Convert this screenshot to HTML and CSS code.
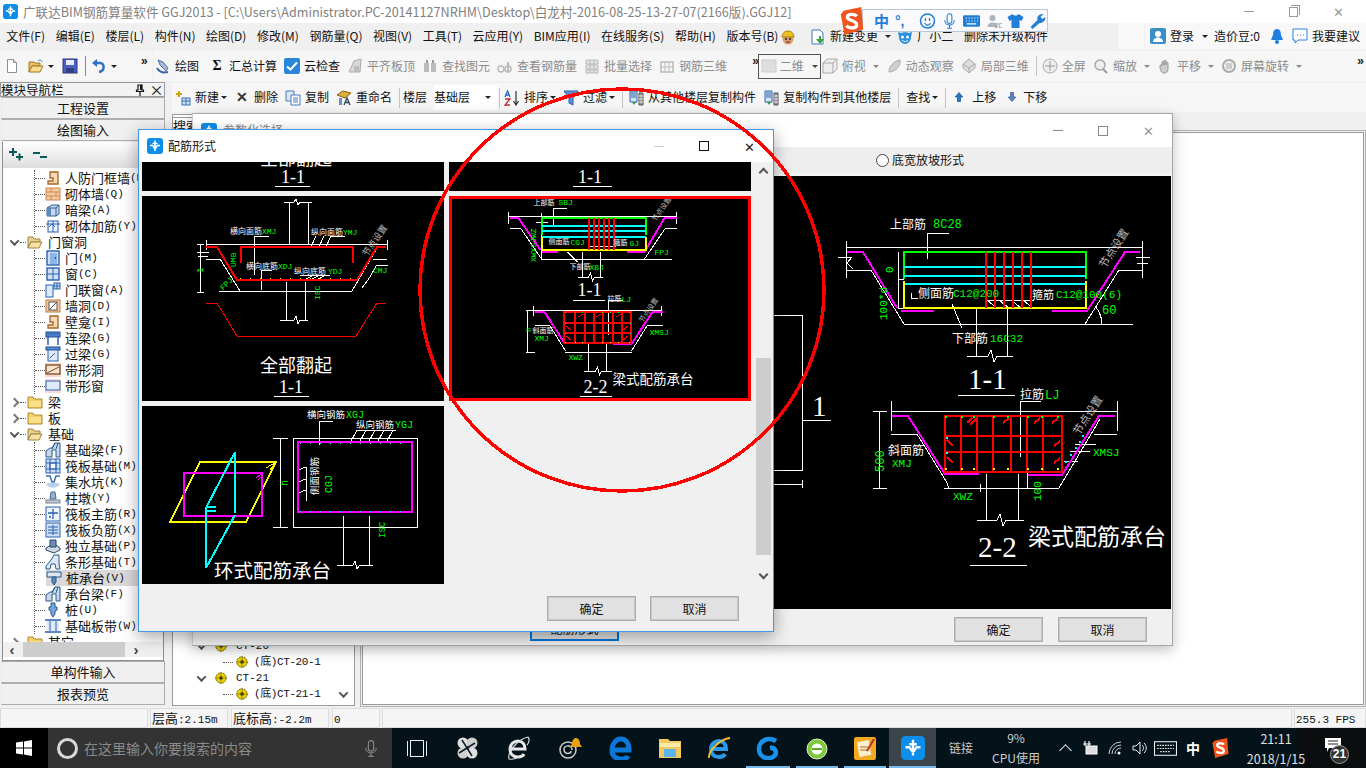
FILE: index.html
```html
<!DOCTYPE html>
<html lang="zh">
<head>
<meta charset="utf-8">
<title>广联达BIM钢筋算量软件</title>
<link rel="stylesheet" href="styles.css">
</head>
<body>
<svg class="defs" aria-hidden="true">
<symbol id="logo" viewBox="0 0 16 16"><rect width="16" height="16" rx="3" fill="#0c8eea"/><path d="M8 2.500V13M3 7.500h2.500c1 0 1 3 2.500 3s1.500-3 2.500-3H13M5.500 5.500h5" fill="none" stroke="#fff" stroke-width="1.600"/></symbol>
<symbol id="t-new" viewBox="0 0 16 16"><path d="M3.500 1.500h6l3 3v10h-9z" fill="#fff" stroke="#8a8f99"/><path d="M9.500 1.500v3h3" fill="#dfe6f2" stroke="#8a8f99"/></symbol>
<symbol id="t-open" viewBox="0 0 16 16"><path d="M1 14V4h5l1 1h5v3H4z" fill="#e8c060" stroke="#a07820"/><path d="M1 14l3-6h11l-3 6z" fill="#f5dc90" stroke="#a07820"/><path d="M10 3c2-2 3-1 4 1" fill="none" stroke="#3a70c0"/></symbol>
<symbol id="t-save" viewBox="0 0 16 16"><rect x="1" y="1" width="14" height="14" fill="#4a5fc0" stroke="#2c3680"/><rect x="4" y="2" width="8" height="5" fill="#e8ecf8"/><rect x="4" y="10" width="8" height="5" fill="#30407c"/></symbol>
<symbol id="t-undo" viewBox="0 0 16 16"><path d="M4 5h5c5 0 5 8-1 9" fill="none" stroke="#2f6fc8" stroke-width="2.500"/><path d="M1 5l5-4v8z" fill="#2f6fc8"/></symbol>
<symbol id="t-draw" viewBox="0 0 16 16"><path d="M3 2l5 2 5 6-2 3-6-6z" fill="#a8b8d8" stroke="#5070a0"/><path d="M2 10c3 5 7 5 11 4" fill="none" stroke="#3a60b0" stroke-width="2"/></symbol>
<symbol id="t-cloud" viewBox="0 0 16 16"><rect width="16" height="16" rx="2" fill="#2a86d8"/><path d="M3 8.500l3.500 3L13 4.500" fill="none" stroke="#fff" stroke-width="2"/></symbol>
<symbol id="t-flat" viewBox="0 0 16 16"><path d="M2 14l5-11 7-2-1 13z" fill="#d8d8d8" stroke="#aaa"/><path d="M7 8h5v6H7z" fill="#bbb"/></symbol>
<symbol id="t-find" viewBox="0 0 16 16"><path d="M2 5h5v9H2zM9 5h5v9H9z" fill="#bbb"/><path d="M4 2h2v3H4zM10 2h2v3h-2z" fill="#999"/></symbol>
<symbol id="t-qty" viewBox="0 0 16 16"><circle cx="4" cy="11" r="3" fill="none" stroke="#bbb" stroke-width="1.500"/><path d="M11 4v10" stroke="#bbb" stroke-width="2"/><circle cx="11" cy="11" r="3" fill="none" stroke="#bbb" stroke-width="1.500"/></symbol>
<symbol id="t-batch" viewBox="0 0 16 16"><path d="M2 2h12v4H2zM2 7h12v4H2zM2 12h12v3H2z" fill="#e2e2e2" stroke="#bbb"/><path d="M6 2v13M10 2v13" stroke="#bbb"/></symbol>
<symbol id="t-3d" viewBox="0 0 16 16"><path d="M2 4h12v10H2z" fill="none" stroke="#bbb" stroke-width="1.500"/><path d="M2 9h12M6 4v10M10 4v10" stroke="#bbb"/></symbol>
<symbol id="t-flat2" viewBox="0 0 16 16"><rect x="1" y="2" width="14" height="12" fill="#dedede" stroke="#ccc"/></symbol>
<symbol id="t-top" viewBox="0 0 16 16"><path d="M1 5l4-4h10v10l-4 4H1z" fill="#eee" stroke="#aaa"/><path d="M1 5h10v10M11 5l4-4" fill="none" stroke="#aaa"/></symbol>
<symbol id="t-orbit" viewBox="0 0 16 16"><path d="M3 14C3 8 8 3 14 2c1 6-4 11-10 12z" fill="#cfcfcf" stroke="#aaa"/></symbol>
<symbol id="t-local" viewBox="0 0 16 16"><path d="M2 6l6-5 6 5v4l-6 5-6-5z" fill="#ddd" stroke="#aaa"/><path d="M2 6l6 4 6-4M8 10v5" fill="none" stroke="#aaa"/></symbol>
<symbol id="t-full" viewBox="0 0 16 16"><circle cx="8" cy="8" r="7" fill="#eee" stroke="#aaa"/><path d="M8 3v10M3 8h10" stroke="#999"/></symbol>
<symbol id="t-zoom" viewBox="0 0 16 16"><circle cx="7" cy="7" r="5" fill="#eee" stroke="#aaa" stroke-width="1.500"/><path d="M10 11l4 4" stroke="#999" stroke-width="2"/></symbol>
<symbol id="t-pan" viewBox="0 0 16 16"><path d="M3 9c0-3 2-3 2-1V4c0-1 2-1 2 0v3-4c0-1 2-1 2 0v4-2c0-1 2-1 2 0v6c0 3-2 4-4 4s-3-1-4-5z" fill="#ccc" stroke="#999"/></symbol>
<symbol id="t-rot" viewBox="0 0 16 16"><circle cx="8" cy="8" r="6" fill="#f0f0f0" stroke="#aaa" stroke-width="2"/><rect x="5" y="5" width="6" height="6" fill="#ccc"/></symbol>
<symbol id="t-add" viewBox="0 0 16 16"><path d="M4 1v6M1 4h6" stroke="#d8a010" stroke-width="2"/><rect x="7" y="8" width="8" height="7" fill="#cfe0f5" stroke="#3a70b0"/><path d="M7 11h8M11 8v7" stroke="#3a70b0"/></symbol>
<symbol id="t-copy" viewBox="0 0 16 16"><path d="M1 1h8v10H1z" fill="#d8e6f6" stroke="#4a78b8"/><path d="M6 5h9v10H6z" fill="#fff" stroke="#4a78b8"/><path d="M8 8h5M8 10h5M8 12h5" stroke="#4a78b8"/></symbol>
<symbol id="t-ren" viewBox="0 0 16 16"><path d="M1 5l6-4 8 2-6 5z" fill="#d8b040" stroke="#906010"/><path d="M3 8h3v7H3z" fill="#6a90c0"/><path d="M8 15l3-7 3 7M9.500 12.500h3" fill="none" stroke="#345" stroke-width="1.300"/></symbol>
<symbol id="t-sort" viewBox="0 0 16 16"><path d="M1 7l2.500-6L6 7M2 5h3" fill="none" stroke="#2a66b8" stroke-width="1.300"/><path d="M1 9h5L1 15h5" fill="none" stroke="#b03030" stroke-width="1.300"/><path d="M12 1v13M9.500 11l2.500 4 2.500-4" fill="none" stroke="#333" stroke-width="1.200"/></symbol>
<symbol id="t-filter" viewBox="0 0 16 16"><path d="M1 1h14L10 8v7l-4-2V8z" fill="#5a90d8" stroke="#2c60a8"/></symbol>
<symbol id="t-cp1" viewBox="0 0 16 16"><path d="M2 1h7v11H2z" fill="#d8e6f6" stroke="#2a60a8"/><path d="M3 3h5M3 5h5M3 7h5" stroke="#2a60a8"/><path d="M4 12l2 3 2-3z" fill="#2aa040"/><path d="M11 3h4v12h-4z" fill="#999" stroke="#555"/><path d="M11 6h4M11 9h4M11 12h4" stroke="#eee"/></symbol>
<symbol id="t-up" viewBox="0 0 16 16"><path d="M8 2l5 6h-3v6H6V8H3z" fill="#2a78c8" stroke="#1a5090"/></symbol>
<symbol id="t-down" viewBox="0 0 16 16"><path d="M6 2h4v6h3l-5 6-5-6h3z" fill="#5a84c8" stroke="#3a5a98"/></symbol>
<symbol id="m-hat" viewBox="0 0 16 16"><circle cx="8" cy="10" r="5.500" fill="#d8a070"/><path d="M2 8c0-8 12-8 12 0z" fill="#f0c020" stroke="#a08010"/><circle cx="6" cy="10" r="1" fill="#222"/><circle cx="10" cy="10" r="1" fill="#222"/><path d="M6 13h4" stroke="#622"/></symbol>
<symbol id="m-doc" viewBox="0 0 16 16"><path d="M2 1h8l3 3v11H2z" fill="#fff" stroke="#3a78c0"/><path d="M7 9h3V6h2v3h3l-4 5z" fill="#3aa040" transform="translate(-1 1)"/></symbol>
<symbol id="m-bot" viewBox="0 0 16 16"><path d="M1 3l3 1c2-1 6-1 8 0l3-1-1 5c0 4-3 7-6 7s-6-3-6-7z" fill="#2a90e0"/><circle cx="5.500" cy="8" r="1.500" fill="#fff"/><circle cx="10.500" cy="8" r="1.500" fill="#fff"/><path d="M5 11c2 2 4 2 6 0" fill="none" stroke="#fff"/></symbol>
<symbol id="m-user" viewBox="0 0 16 16"><rect width="16" height="16" rx="2" fill="#3a8ec8"/><circle cx="8" cy="6" r="3" fill="#fff"/><path d="M3 14c0-6 10-6 10 0z" fill="#fff"/></symbol>
<symbol id="m-bell" viewBox="0 0 16 16"><path d="M8 1c3 0 4 3 4 6l2 5H2l2-5c0-3 1-6 4-6z" fill="#1f7ee0"/><circle cx="8" cy="14" r="2" fill="#1f7ee0"/></symbol>
<symbol id="m-msg" viewBox="0 0 16 16"><path d="M1 1h14v11H6l-3 3v-3H1z" fill="#fff" stroke="#2a80e0"/><path d="M5 7h1M8 7h1M11 7h1" stroke="#2a80e0"/></symbol>
<symbol id="m-pin" viewBox="0 0 10 12"><path d="M3 1h4v5h1.500v1.500h-7V6H3zM5 7.500V12" fill="none" stroke="#111" stroke-width="1.200"/><path d="M5 1h2v5H5z" fill="#111"/></symbol>
<symbol id="n-plus" viewBox="0 0 16 16"><path d="M1 5h8M5 1v8M8 10h7M11.500 6.500v7" stroke="#0a5a5a" stroke-width="2"/></symbol>
<symbol id="n-minus" viewBox="0 0 16 16"><path d="M1 6h7M8 10h7" stroke="#0a5a5a" stroke-width="2"/></symbol>
<symbol id="f-closed" viewBox="0 0 16 16"><path d="M1 14V3h5l1 2h8v9z" fill="#f3d26a" stroke="#b08a2a"/><path d="M2 7h12v6H2z" fill="#f8e08a"/></symbol>
<symbol id="f-open" viewBox="0 0 16 16"><path d="M1 14V3h5l1 2h6v3H4z" fill="#e8d090" stroke="#a08440"/><path d="M1 14l3-6h11l-3 6z" fill="#f6e2a8" stroke="#a08440"/></symbol>
<symbol id="a-frame" viewBox="0 0 16 16"><path d="M5 2h8v12H3v-3h5V8H5z" fill="#f7d8b8" stroke="#a86420" stroke-width="1.300"/></symbol>
<symbol id="a-brick" viewBox="0 0 16 16"><rect x="1" y="2" width="14" height="12" fill="#f4c8a0" stroke="#d08a50"/><path d="M1 6h14M1 10h14M6 2v4M11 6v4M6 10v4" stroke="#d08a50"/></symbol>
<symbol id="a-hid" viewBox="0 0 16 16"><path d="M2 6l5-3h7v9l-3 2H2z" fill="#c8d8ec" stroke="#2a5a90"/><path d="M2 6h9v8M11 6l3-3" fill="none" stroke="#2a5a90"/><rect x="2" y="6" width="4" height="8" fill="#5a88b8"/></symbol>
<symbol id="a-add" viewBox="0 0 16 16"><rect x="3" y="3" width="10" height="11" fill="#eef3fa" stroke="#2a60b0"/><path d="M1 6h14M8 3v11M4 9l3-3 3 3" fill="none" stroke="#2a60b0"/></symbol>
<symbol id="a-door" viewBox="0 0 16 16"><rect x="2" y="1" width="12" height="14" fill="#cfe0f5" stroke="#2a60b0" stroke-width="1.400"/><rect x="5" y="3" width="7" height="11" fill="#8fb4e8"/><circle cx="10.500" cy="8" r=".8" fill="#123"/></symbol>
<symbol id="a-win" viewBox="0 0 16 16"><rect x="2" y="2" width="12" height="12" fill="#cfe0f5" stroke="#2a60b0" stroke-width="1.400"/><path d="M8 2v12M2 8h12" stroke="#2a60b0"/></symbol>
<symbol id="a-dw" viewBox="0 0 16 16"><rect x="1" y="3" width="7" height="12" fill="#dfeaf8" stroke="#2a60b0"/><rect x="9" y="1" width="6" height="6" fill="#cfe0f5" stroke="#2a60b0"/><path d="M12 1v6M9 4h6" stroke="#2a60b0"/></symbol>
<symbol id="a-hole" viewBox="0 0 16 16"><rect x="1" y="2" width="14" height="12" fill="#f4c8a0" stroke="#c07a40"/><rect x="4" y="4" width="8" height="8" fill="#fff" stroke="#555"/><path d="M4 12l8-8" stroke="#555"/></symbol>
<symbol id="a-link" viewBox="0 0 16 16"><rect x="1" y="2" width="14" height="5" fill="#4a80c8" stroke="#1f4f90"/><path d="M3 7v8M13 7v8M3 4h1M6 4h1M9 4h1M12 4h1" stroke="#2a60b0" stroke-width="1.500"/></symbol>
<symbol id="a-lint" viewBox="0 0 16 16"><rect x="1" y="1" width="14" height="3" fill="#5a90d0" stroke="#1f4f90"/><rect x="3" y="4" width="10" height="11" fill="#dfeaf8" stroke="#2a60b0"/><path d="M5 12l5-5" stroke="#2a60b0"/></symbol>
<symbol id="a-bhole" viewBox="0 0 16 16"><path d="M0 1h16v14H0z" fill="#f6d8c8"/><rect x="1" y="3" width="14" height="9" fill="#f2e6d0" stroke="#804820" stroke-width="1.300"/><path d="M2 11l12-6" stroke="#804820"/></symbol>
<symbol id="a-bwin" viewBox="0 0 16 16"><path d="M0 1h16v14H0z" fill="#f8d8d8"/><rect x="1" y="3" width="14" height="9" fill="#dfeaf8" stroke="#2a60b0"/></symbol>
<symbol id="b-beam" viewBox="0 0 16 16"><path d="M1 15V9l4-3h2l3-5h5v14h-4V8H7v7z" fill="#c6d8ee" stroke="#28588c"/><path d="M10 1l-3 6M13 1l-2 6" stroke="#28588c"/></symbol>
<symbol id="b-raft" viewBox="0 0 16 16"><rect x="1" y="1" width="14" height="14" fill="#cfe0f5" stroke="#2a60b0"/><rect x="5" y="5" width="6" height="6" fill="#fff" stroke="#2a60b0"/><path d="M1 5h14M1 11h14M5 1v14M11 1v14" stroke="#2a60b0"/></symbol>
<symbol id="b-sump" viewBox="0 0 16 16"><path d="M1 2h4l2 6h2l2-6h4" fill="none" stroke="#3a70b0" stroke-width="1.500"/><path d="M1 10c3 5 11 5 14 0l-3-1H4z" fill="#b8d0ea"/></symbol>
<symbol id="b-pier" viewBox="0 0 16 16"><path d="M6 2h4l1 7H5z" fill="#9ab0cc" stroke="#4a6a90"/><rect x="1" y="10" width="14" height="3" fill="#c0c8d4" stroke="#7a8494"/></symbol>
<symbol id="b-rm" viewBox="0 0 16 16"><rect x="1" y="1" width="14" height="14" fill="#eef4fb" stroke="#2a60b0"/><path d="M8 3v10M3 7h10M4 11h2" stroke="#2a60b0" stroke-width="1.300"/></symbol>
<symbol id="b-rn" viewBox="0 0 16 16"><rect x="1" y="1" width="14" height="14" fill="#cfe0f5" stroke="#2a60b0"/><path d="M8 3v10M3 8h10M3 5h10M3 11h10" stroke="#2a60b0"/></symbol>
<symbol id="b-iso" viewBox="0 0 16 16"><path d="M1 10l5-3h5l4 3v2l-6 3-8-3z" fill="#cfd8e4" stroke="#28486c"/><path d="M5 2h6v7H5z" fill="#6a8eb8" stroke="#28486c"/></symbol>
<symbol id="b-strip" viewBox="0 0 16 16"><path d="M1 15v-3l5-6 3-5h5v9l1 5h-4l-1-5H6l-1 5z" fill="#dde8f4" stroke="#28588c"/></symbol>
<symbol id="b-cap" viewBox="0 0 16 16"><path d="M1 2h14v5H1z" fill="#dfe6ee" stroke="#28588c"/><path d="M6 7h4v5l-2 3-2-3z" fill="#5a88c0" stroke="#28588c"/></symbol>
<symbol id="b-pile" viewBox="0 0 16 16"><path d="M6 1h4v4h2v3l-2 1v3l-2 3-2-3V9L4 8V5h2z" fill="#7aa4d8" stroke="#28588c"/></symbol>
<symbol id="b-band" viewBox="0 0 16 16"><path d="M0 2h16M0 14h16" stroke="#2a60b0" stroke-width="1.500"/><rect x="2" y="3" width="12" height="10" fill="#dfeaf8"/><path d="M5 3v10M11 3v10" stroke="#2a60b0"/></symbol>
<symbol id="gear" viewBox="0 0 16 16"><circle cx="8" cy="8" r="6" fill="#e8d000" stroke="#5a5000" stroke-dasharray="2 1"/><circle cx="8" cy="8" r="2" fill="#222"/><path d="M8 1v14M1 8h14" stroke="#6a5a00" stroke-width=".6"/></symbol>
<symbol id="s-pin" viewBox="0 0 24 24"><circle cx="8" cy="7" r="5.500" fill="#e0e0e0"/><circle cx="17" cy="7" r="5.500" fill="#d0d0d0"/><circle cx="8" cy="17" r="5.500" fill="#d0d0d0"/><circle cx="17" cy="17" r="5.500" fill="#e0e0e0"/><path d="M12 12L7 4M12 12l8-5M12 12l5 8M12 12l-8 5" stroke="#10202a" stroke-width="1.500"/></symbol>
<symbol id="s-ie" viewBox="0 0 24 24"><path d="M5 13h14c0-5-3-8-7-8s-8 3-8 8 3 8 8 8c3 0 5-1 6-3" fill="none" stroke="#e8e8e8" stroke-width="3"/><path d="M3 23C1 15 13 3 22 1M22 1c2 2 1 6-1 8M3 23c4 1 8-1 10-2" fill="none" stroke="#e0e0e0" stroke-width="1.200"/></symbol>
<symbol id="s-swirl" viewBox="0 0 24 24"><circle cx="10" cy="14" r="8" fill="none" stroke="#ccc" stroke-width="1.500"/><path d="M14 14c0-6-9-5-8 0s7 4 7 1" fill="none" stroke="#ccc" stroke-width="1.500"/><path d="M14 8c0-8 8-8 8 0l2 3H12z" fill="#e8a010"/></symbol>
<symbol id="s-edge" viewBox="0 0 24 24"><path d="M3 14h17c0-7-3-11-8-11S3 8 3 14s4 9 9 9c3 0 6-1 7-3" fill="none" stroke="#0a78d8" stroke-width="5"/></symbol>
<symbol id="s-folder" viewBox="0 0 24 24"><path d="M1 3h9l2 2h11v17H1z" fill="#f2ca60"/><rect x="2" y="7" width="20" height="4" fill="#fbe9a8"/><rect x="6" y="13" width="12" height="8" fill="#5ab4ee"/></symbol>
<symbol id="s-ie2" viewBox="0 0 24 24"><path d="M5 13h14c0-5-3-8-7-8s-8 3-8 8 3 8 8 8c3 0 5-1 6-3" fill="none" stroke="#2a9ae8" stroke-width="4"/><path d="M2 22C1 15 13 3 23 2" fill="none" stroke="#f0c030" stroke-width="1.800"/></symbol>
<symbol id="s-g" viewBox="0 0 24 24"><path d="M20 5C12 0 3 5 3 13s8 11 14 8c5-3 3-10-3-9" fill="none" stroke="#1a90e8" stroke-width="4.500"/></symbol>
<symbol id="s-green" viewBox="0 0 24 24"><circle cx="12" cy="13" r="10" fill="#7ec83c" stroke="#dff0c0"/><circle cx="12" cy="13" r="5.500" fill="#fff"/><path d="M7 13h10" stroke="#60a828" stroke-width="2"/></symbol>
<symbol id="s-note" viewBox="0 0 24 24"><rect x="1" y="1" width="22" height="23" rx="2" fill="#f2a820"/><rect x="5" y="5" width="12" height="15" fill="#faf0d0" transform="rotate(-10 11 12)"/><path d="M7 11h8M7 14h8" stroke="#a87010"/><path d="M21 3l-7 12" stroke="#c03020" stroke-width="2"/></symbol>
<symbol id="i-mic" viewBox="0 0 16 20"><rect x="5" y="1" width="6" height="12" rx="3" fill="none" stroke="currentColor" stroke-width="1.300"/><path d="M2 9c0 8 12 8 12 0M8 15v4M5 19h6" fill="none" stroke="currentColor" stroke-width="1.300"/></symbol>
<symbol id="i-shirt" viewBox="0 0 16 16"><path d="M5 1L0 4l2 4 2-1v8h8V7l2 1 2-4-5-3c-1 2-5 2-6 0z" fill="#1f7ed8"/></symbol>
<symbol id="i-wrench" viewBox="0 0 16 16"><path d="M1 14l7-7c-1-4 2-6 6-6l-3 3 2 2 3-2c0 4-3 6-6 6l-7 6z" fill="#1f7ed8"/></symbol>
<symbol id="i-kb" viewBox="0 0 18 14"><rect x="0" y="1" width="18" height="12" rx="1.500" fill="#1f7ed8"/><path d="M3 4h1M6 4h1M9 4h1M12 4h1M15 4h1M3 7h1M6 7h1M9 7h1M12 7h1M15 7h1M4 10h10" stroke="#fff" stroke-width="1.300"/></symbol>
<symbol id="i-sg" viewBox="0 0 24 30"><path d="M3 4L22 0l2 24L4 30 0 8z" fill="#f0541e"/><path d="M17 10c-2-3-10-3-10 1s10 3 10 8-9 4-11 1" fill="none" stroke="#fff" stroke-width="3.500"/></symbol>
</svg>

<div class="app">
  <header class="titlebar">
    <svg class="app-ic"><use href="#logo"/></svg>
    <span class="title-text">广联达BIM钢筋算量软件 GGJ2013 - [C:\Users\Administrator.PC-20141127NRHM\Desktop\白龙村-2016-08-25-13-27-07(2166版).GGJ12]</span>
    <div class="win-ctl">
      <span class="wc-min"></span><span class="wc-restore"></span><span class="wc-close">✕</span>
    </div>
  </header>

  <nav class="menubar">
    <span>文件(F)</span><span>编辑(E)</span><span>楼层(L)</span><span>构件(N)</span><span>绘图(D)</span><span>修改(M)</span><span>钢筋量(Q)</span><span>视图(V)</span><span>工具(T)</span><span>云应用(Y)</span><span>BIM应用(I)</span><span>在线服务(S)</span><span>帮助(H)</span><span>版本号(B)</span>
    <svg class="ic hat"><use href="#m-hat"/></svg>
    <span class="mi first"><svg class="ic"><use href="#m-doc"/></svg>新建变更<i class="dd"></i></span>
    <span class="mi"><svg class="ic"><use href="#m-bot"/></svg>厂小二</span>
    <span>删除未升级构件</span>
    <div class="account">
      <span class="blank"></span>
      <div class="acc-row">
        <svg class="ic"><use href="#m-user"/></svg><span>登录</span><i class="dd"></i>
        <span class="bean">造价豆:0</span>
        <svg class="ic bell"><use href="#m-bell"/></svg>
        <svg class="ic"><use href="#m-msg"/></svg><span>我要建议</span>
      </div>
    </div>
  </nav>

  <div class="tb1">
    <div class="tb1-left">
      <svg class="ic"><use href="#t-new"/></svg>
      <svg class="ic gapm"><use href="#t-open"/></svg><i class="dd"></i>
      <svg class="ic gapm"><use href="#t-save"/></svg>
      <span class="vsep"></span>
      <svg class="ic"><use href="#t-undo"/></svg><i class="dd"></i>
      <b class="more">»</b>
    </div>
    <div class="tb1-right">
      <span class="tool"><svg class="ic"><use href="#t-draw"/></svg>绘图</span>
      <span class="tool w"><b class="sigma">Σ</b>汇总计算</span>
      <span class="tool"><svg class="ic"><use href="#t-cloud"/></svg>云检查</span>
      <span class="tool off"><svg class="ic"><use href="#t-flat"/></svg>平齐板顶</span>
      <span class="tool off"><svg class="ic"><use href="#t-find"/></svg>查找图元</span>
      <span class="tool off"><svg class="ic"><use href="#t-qty"/></svg>查看钢筋量</span>
      <span class="tool off"><svg class="ic"><use href="#t-batch"/></svg>批量选择</span>
      <span class="tool off"><svg class="ic"><use href="#t-3d"/></svg>钢筋三维</span>
      <b class="more m2">»</b>
      <span class="combo2"><svg class="ic"><use href="#t-flat2"/></svg>二维<i class="dd"></i></span>
      <span class="tool off n"><svg class="ic"><use href="#t-top"/></svg>俯视<i class="dd g"></i></span>
      <span class="tool off"><svg class="ic"><use href="#t-orbit"/></svg>动态观察</span>
      <span class="tool off"><svg class="ic"><use href="#t-local"/></svg>局部三维</span>
      <span class="vsep lt tight"></span>
      <span class="tool off"><svg class="ic"><use href="#t-full"/></svg>全屏</span>
      <span class="tool off"><svg class="ic"><use href="#t-zoom"/></svg>缩放<i class="dd g"></i></span>
      <span class="tool off"><svg class="ic"><use href="#t-pan"/></svg>平移<i class="dd g"></i></span>
      <span class="tool off"><svg class="ic"><use href="#t-rot"/></svg>屏幕旋转<i class="dd g"></i></span>
      <b class="more end">»</b>
    </div>
  </div>

  <div class="workspace">
    <aside class="sidebar">
      <div class="nav-head"><span>模块导航栏</span><svg class="pin"><use href="#m-pin"/></svg><span class="x">×</span></div>
      <button class="navbtn" type="button">工程设置</button>
      <button class="navbtn" type="button">绘图输入</button>
      <div class="treepane">
        <div class="tree-tools"><svg class="ic"><use href="#n-plus"/></svg><svg class="ic"><use href="#n-minus"/></svg></div>
        <div class="tree">
          <div class="lev2">
            <div class="row"><i class="dash"></i><svg class="ic"><use href="#a-frame"/></svg>人防门框墙<em>(R)</em></div>
            <div class="row"><i class="dash"></i><svg class="ic"><use href="#a-brick"/></svg>砌体墙<em>(Q)</em></div>
            <div class="row"><i class="dash"></i><svg class="ic"><use href="#a-hid"/></svg>暗梁<em>(A)</em></div>
            <div class="row"><i class="dash"></i><svg class="ic"><use href="#a-add"/></svg>砌体加筋<em>(Y)</em></div>
          </div>
          <div class="row l1"><i class="chev open"></i><i class="dash s"></i><svg class="ic"><use href="#f-open"/></svg>门窗洞</div>
          <div class="lev2">
            <div class="row"><i class="dash"></i><svg class="ic"><use href="#a-door"/></svg>门<em>(M)</em></div>
            <div class="row"><i class="dash"></i><svg class="ic"><use href="#a-win"/></svg>窗<em>(C)</em></div>
            <div class="row"><i class="dash"></i><svg class="ic"><use href="#a-dw"/></svg>门联窗<em>(A)</em></div>
            <div class="row"><i class="dash"></i><svg class="ic"><use href="#a-hole"/></svg>墙洞<em>(D)</em></div>
            <div class="row"><i class="dash"></i><svg class="ic"><use href="#a-frame"/></svg>壁龛<em>(I)</em></div>
            <div class="row"><i class="dash"></i><svg class="ic"><use href="#a-link"/></svg>连梁<em>(G)</em></div>
            <div class="row"><i class="dash"></i><svg class="ic"><use href="#a-lint"/></svg>过梁<em>(G)</em></div>
            <div class="row"><i class="dash"></i><svg class="ic"><use href="#a-bhole"/></svg>带形洞</div>
            <div class="row"><i class="dash"></i><svg class="ic"><use href="#a-bwin"/></svg>带形窗</div>
          </div>
          <div class="row l1"><i class="chev"></i><i class="dash s"></i><svg class="ic"><use href="#f-closed"/></svg>梁</div>
          <div class="row l1"><i class="chev"></i><i class="dash s"></i><svg class="ic"><use href="#f-closed"/></svg>板</div>
          <div class="row l1"><i class="chev open"></i><i class="dash s"></i><svg class="ic"><use href="#f-open"/></svg>基础</div>
          <div class="lev2">
            <div class="row"><i class="dash"></i><svg class="ic"><use href="#b-beam"/></svg>基础梁<em>(F)</em></div>
            <div class="row"><i class="dash"></i><svg class="ic"><use href="#b-raft"/></svg>筏板基础<em>(M)</em></div>
            <div class="row"><i class="dash"></i><svg class="ic"><use href="#b-sump"/></svg>集水坑<em>(K)</em></div>
            <div class="row"><i class="dash"></i><svg class="ic"><use href="#b-pier"/></svg>柱墩<em>(Y)</em></div>
            <div class="row"><i class="dash"></i><svg class="ic"><use href="#b-rm"/></svg>筏板主筋<em>(R)</em></div>
            <div class="row"><i class="dash"></i><svg class="ic"><use href="#b-rn"/></svg>筏板负筋<em>(X)</em></div>
            <div class="row"><i class="dash"></i><svg class="ic"><use href="#b-iso"/></svg>独立基础<em>(P)</em></div>
            <div class="row"><i class="dash"></i><svg class="ic"><use href="#b-strip"/></svg>条形基础<em>(T)</em></div>
            <div class="row sel"><i class="dash"></i><svg class="ic"><use href="#b-cap"/></svg>桩承台<em>(V)</em></div>
            <div class="row"><i class="dash"></i><svg class="ic"><use href="#b-beam"/></svg>承台梁<em>(F)</em></div>
            <div class="row"><i class="dash"></i><svg class="ic"><use href="#b-pile"/></svg>桩<em>(U)</em></div>
            <div class="row"><i class="dash"></i><svg class="ic"><use href="#b-band"/></svg>基础板带<em>(W)</em></div>
          </div>
          <div class="row l1"><i class="chev"></i><i class="dash s"></i><svg class="ic"><use href="#f-closed"/></svg>其它</div>
        </div>
        <div class="hscroll"><span class="ha">‹</span><span class="hthumb"></span><span class="ha">›</span></div>
      </div>
      <button class="navbtn" type="button">单构件输入</button>
      <button class="navbtn" type="button">报表预览</button>
    </aside>

    <main class="mainarea">
      <div class="tb2">
        <span class="tool"><svg class="ic"><use href="#t-add"/></svg>新建<i class="dd"></i></span>
        <span class="tool"><b class="xmark">✕</b>删除</span>
        <span class="tool"><svg class="ic"><use href="#t-copy"/></svg>复制</span>
        <span class="tool"><svg class="ic"><use href="#t-ren"/></svg>重命名</span>
        <span class="vsep lt"></span>
        <span class="floor-lbl">楼层</span>
        <span class="floor-box">基础层<i class="dd"></i></span>
        <span class="vsep lt after-box"></span>
        <span class="tool"><svg class="ic"><use href="#t-sort"/></svg>排序<i class="dd"></i></span>
        <span class="tool"><svg class="ic"><use href="#t-filter"/></svg>过滤<i class="dd"></i></span>
        <span class="vsep lt tight"></span>
        <span class="tool"><svg class="ic"><use href="#t-cp1"/></svg>从其他楼层复制构件</span>
        <span class="tool"><svg class="ic"><use href="#t-cp1"/></svg>复制构件到其他楼层</span>
        <span class="vsep lt"></span>
        <span class="tool">查找<i class="dd"></i></span>
        <span class="vsep lt"></span>
        <span class="tool mv"><svg class="ic sm"><use href="#t-up"/></svg>上移</span>
        <span class="tool mv dn"><svg class="ic sm"><use href="#t-down"/></svg>下移</span>
      </div>
      <div class="panes">
        <div class="comp-tree">
          <div class="search-row"><span class="search">搜索</span></div>
          <div class="ct-rows">
            <div class="ct"><i class="chev open"></i><svg class="ic g14"><use href="#gear"/></svg><span class="mono">CT-20</span></div>
            <div class="ct sub"><i class="dash"></i><svg class="ic g14"><use href="#gear"/></svg><span class="mono wide">(底)CT-20-1</span></div>
            <div class="ct"><i class="chev open"></i><svg class="ic g14"><use href="#gear"/></svg><span class="mono">CT-21</span></div>
            <div class="ct sub"><i class="dash"></i><svg class="ic g14"><use href="#gear"/></svg><span class="mono wide">(底)CT-21-1</span></div>
          </div>
          <i class="chev open tail"></i>
        </div>
        <div class="canvas"></div>
      </div>
    </main>
  </div>

  <footer class="status">
    <span class="st s0"></span>
    <span class="st s1">层高<em>:2.15m</em></span>
    <span class="st s2">底标高<em>:-2.2m</em></span>
    <span class="st s3"><em>0</em></span>
    <span class="st s4"></span>
    <span class="st s5"><em>255.3 FPS</em></span>
  </footer>
</div>

<section class="win back-win">
  <div class="win-title">
    <svg class="app-ic"><use href="#logo"/></svg><span class="grey">参数化选择</span>
    <div class="dlg-ctl"><span class="wc-min"></span><span class="wc-max"></span><span class="wc-close">✕</span></div>
  </div>
  <div class="radio-row"><span class="radio"></span>底宽放坡形式</div>
  <svg class="cad big" viewBox="193 175 978 433">
    <rect x="193" y="175" width="978" height="433" fill="#000"/>
    <g class="w">
      <path d="M773 314H802V469H773M802 419H831M773 483H802M802 479V487"/>
      <path d="M846 246H1142M846 240V277M846 269H871L904 323H1133M1142 240V277M1142 269H1119L1085 323"/>
      <path d="M838 256H852L847 262L853 268M1136 256H1150M1137 262H1148"/>
      <path d="M898 251V307H904M898 278H904M976 308V355M1007 308V355M967 355H988L991 349L994 361L997 355H1013"/>
      <path d="M927 258V232H949M911 292V297H918M952 303L962 327M1102 323C1102 316 1099 310 1095 305"/>
      <path d="M988 300L996 306M1000 300L1008 306M1012 300L1020 306M1024 300L1032 306M985 299H1034"/>
      <path d="M958 394H1015M970 564H1027"/>
      <path d="M891 410H1117M891 400V430M1117 400V430M891 433H917L946 480L949 487H1059L1100 418M1117 433H1094M879 410V487M873 410H887M873 487H887"/>
      <path d="M986 473V519M1018 473V519M977 519H997L1000 513L1003 525L1006 519H1024M1020 400V456M1020 400H1041"/>
      <path d="M944 487H980M980 483V491M1027 487V470M1096 443H1075M1090 450H1070M1078 460H1064"/>
    </g>
    <g class="m t2"><path d="M847 251H863L897 307"/><path d="M901 310H934M1052 310H1087L1125 251H1140"/></g>
    <path class="gr t2" d="M904 278V251H1086V278"/>
    <path class="cy t2" d="M904 266H1086M904 275H1086M904 283H1086"/>
    <path class="ye t2" d="M904 280V307H1086V280"/>
    <path class="re t2" d="M986 251V307M995 251V307M1004 251V307M1013 251V307M1022 251V307M1031 251V307"/>
    <text class="tw" x="890" y="228" font-size="12">上部筋</text><text class="tg" x="933" y="227" font-size="12">8C28</text>
    <text class="tw" x="918" y="297" font-size="12">侧面筋</text><text class="tg" x="953" y="296" font-size="11">C12@200</text>
    <text class="tw" x="1032" y="298" font-size="11">箍筋</text><text class="tg" x="1056" y="297" font-size="11">C12@100(6)</text>
    <text class="tw" x="952" y="342" font-size="12">下部筋</text><text class="tg" x="990" y="341" font-size="11">16C32</text>
    <text class="tg" x="1102" y="313" font-size="12">60</text>
    <text class="tg" transform="rotate(-90 893 272)" x="893" y="272" font-size="11">0</text>
    <text class="tg" transform="rotate(-90 893 304)" x="878" y="298" font-size="11">100*d</text>
    <text class="tw dim" transform="rotate(-57 1105 268)" x="1105" y="268" font-size="11">节点设置</text>
    <text class="ser" x="968" y="388" font-size="29">1-1</text>
    <text class="ser" x="812" y="415" font-size="29">1</text>
    <g class="m t2"><path d="M892 415H908L945 473H979M1028 474H1062L1099 415H1115"/></g>
    <path class="re t2" d="M945 415H1062V471H945ZM961 415V471M977 415V471M993 415V471M1011 415V471M1027 415V471M1043 415V471M945 435H1062M945 451H1062"/>
    <path class="re t2" d="M967 422L972 417M970 424L976 418M1003 422L1009 417M1034 422L1040 417M1052 422L1058 417M947 439L953 445M947 456L953 462M1060 440L1054 445M1060 457L1054 462"/>
    <path class="gr t2" d="M945 416h2M961 416h2M973 416h2M993 416h2M1007 416h2M1027 416h2M1041 416h2M1057 416h2"/>
    <path class="ye t2" d="M945 468h2M961 468h2M973 468h2M993 468h2M1007 468h2M1027 468h2M1041 468h2M1057 468h2"/>
    <path class="cy t2" d="M946 437h2M946 452h2M1065 461h2M1070 454h2M1075 447h2M1079 441h2M1082 435h2"/>
    <text class="tw" x="888" y="454" font-size="12">斜面筋</text><text class="tg" x="892" y="466" font-size="11">XMJ</text>
    <text class="tg" x="1093" y="455" font-size="11">XMSJ</text><text class="tg" x="953" y="499" font-size="11">XWZ</text>
    <text class="tg" transform="rotate(-90 1041 487)" x="1028" y="487" font-size="11">100</text>
    <text class="tg" transform="rotate(-90 884 459)" x="872" y="459" font-size="12">500</text>
    <text class="tw" x="1020" y="398" font-size="12">拉筋</text><text class="tg" x="1045" y="398" font-size="12">LJ</text>
    <text class="tw dim" transform="rotate(-57 1079 435)" x="1079" y="435" font-size="11">节点设置</text>
    <text class="ser" x="978" y="556" font-size="29">2-2</text>
    <text class="tw" x="1028" y="544" font-size="23">梁式配筋承台</text>
  </svg>
  <div class="win-foot back-foot">
    <button class="dlgbtn under" type="button">配筋形式</button>
    <button class="dlgbtn" type="button">确定</button>
    <button class="dlgbtn" type="button">取消</button>
  </div>
</section>

<section class="win front-win">
  <div class="win-title">
    <svg class="app-ic"><use href="#logo"/></svg><span>配筋形式</span>
    <div class="dlg-ctl"><span class="wc-min faint"></span><span class="wc-max dark"></span><span class="wc-close dark">✕</span></div>
  </div>
  <div class="picklist">
    <div class="gallery">
      <div class="cell h0">
        <svg class="cad" viewBox="142 162 302 29">
          <text class="tw" x="260" y="165" font-size="18">全部翻起</text>
          <text class="ser" x="281" y="183" font-size="18">1-1</text>
          <path class="wline" d="M275 186H310"/>
        </svg>
      </div>
      <div class="cell h0">
        <svg class="cad" viewBox="449 162 302 29">
          <text class="ser" x="578" y="183" font-size="18">1-1</text>
          <path class="wline" d="M573 186H612"/>
        </svg>
      </div>
      <div class="cell h1">
        <svg class="cad" viewBox="142 196 302 205">
          <g class="w">
            <path d="M284 202H294L296 199L298 205L300 202H312M289 202V244M308 202V244M206 244H387M206 240V250M387 240V250"/>
            <path d="M200 244V292M197 244H204M197 292H204M206 259H220L240 291H352L377 248M219 291H240M387 259H373M197 252H209M198 256H208"/>
            <path d="M286 282V320M305 282V320M280 320H294L296 316L298 324L300 320H308"/>
            <path d="M254 275V236H269M261 290V270H272M311 247L316 236M319 247L324 236M326 247L331 236M331 236H345"/>
            <path d="M306 279L314 275M312 279L320 275M318 279L326 275M300 275H330M370 277L376 266L388 265M362 288L370 277"/>
            <path d="M274 396H309"/>
          </g>
          <path class="re t2" d="M206 247H217L237 280H357L377 247H386M241 263V247H353V263"/>
          <path class="re" d="M206 303H217L237 336H356L377 303H386"/>
          <path class="ye dots" d="M240 278H355"/>
          <text class="tw" x="230" y="234" font-size="8">横向面筋</text><text class="tg" x="262" y="234" font-size="8">XMJ</text>
          <text class="tw" x="311" y="235" font-size="8">纵向面筋</text><text class="tg" x="343" y="235" font-size="8">YMJ</text>
          <text class="tw" x="246" y="269" font-size="8">横向底筋</text><text class="tg" x="278" y="269" font-size="8">XDJ</text>
          <text class="tw" x="294" y="274" font-size="8">纵向底筋</text><text class="tg" x="328" y="274" font-size="8">YDJ</text>
          <text class="tg" x="373" y="273" font-size="8">CMJ</text>
          <text class="tg" transform="rotate(-45 226 288)" x="222" y="288" font-size="8">FPJ</text>
          <text class="tg" transform="rotate(-90 236 257)" x="226" y="257" font-size="8">UMB</text>
          <text class="tg" transform="rotate(-90 203 270)" x="200" y="270" font-size="9">1</text>
          <text class="tg" transform="rotate(-90 320 290)" x="310" y="290" font-size="8">ISC</text>
          <text class="tw dim" transform="rotate(-55 367 257)" x="367" y="257" font-size="9">节点设置</text>
          <text class="tw" x="260" y="372" font-size="18">全部翻起</text>
          <text class="ser" x="279" y="393" font-size="18">1-1</text>
        </svg>
      </div>
      <div class="cell h1 picked">
        <svg class="cad" viewBox="450 196 301 205">
          <g class="w">
            <path d="M509 216H677M509 212V224M677 212V224M510 228H521L542 259H672M677 228H666L645 259M536 222H548M542 213V259"/>
            <path d="M583 252V277M601 252V277M578 277H589L591 273L593 281L595 277H603M554 225V208H567M573 300H605M568 252L578 262M588 246H616"/>
            <path d="M534 310H662M534 306V316M662 306V316M528 310V352M526 352H535M526 310H535M565 352H632M589 344V371M607 344V371M584 371H596L598 367L600 375L602 371H612M580 396H612"/>
            <path d="M609 300V335M609 300H623M535 325H550L566 351M663 325H648L632 351"/>
          </g>
          <path class="m t2" d="M510 218H519L541 250M542 252H558M627 252H645L665 218H677M535 312H545L565 343H585M613 344H632L653 312H663"/>
          <path class="gr t2" d="M542 235V218H646V235"/>
          <path class="cy t2" d="M542 226H646M542 231H646M542 237H646"/>
          <path class="ye t2" d="M542 237V250H646V237"/>
          <path class="re t2" d="M589 218V250M594 218V250M599 218V250M604 218V250M609 218V250M614 218V250"/>
          <path class="re t2" d="M564 312H631V343H564ZM575 312V343M585 312V343M594 312V343M603 312V343M613 312V343M622 312V343M564 323H631M564 333H631"/>
          <path class="re" d="M579 317L583 314M597 317L601 314M617 317L621 314M567 326L571 330M567 336L571 340M628 326L624 330M628 336L624 340"/>
          <path class="gr" d="M565 312h1M575 312h1M582 312h1M602 312h1M610 312h1M618 312h1M629 312h1"/>
          <path class="ye" d="M565 342h1M575 342h1M582 342h1M602 342h1M610 342h1M618 342h1M629 342h1"/>
          <path class="cy" d="M565 323h1M565 333h1M630 323h1M630 333h1"/>
          <text class="tw" x="534" y="205" font-size="7">上部筋</text><text class="tg" x="559" y="205" font-size="8">SBJ</text>
          <text class="tw" x="549" y="244" font-size="7">侧面筋</text><text class="tg" x="571" y="245" font-size="8">CGJ</text>
          <text class="tw" x="614" y="245" font-size="7">箍筋</text><text class="tg" x="630" y="246" font-size="8">GJ</text>
          <text class="tg" x="655" y="255" font-size="8">FPJ</text>
          <text class="tw" x="570" y="269" font-size="7">下部筋</text><text class="tg" x="590" y="270" font-size="8">XBJ</text>
          <text class="tw" x="608" y="301" font-size="7">拉筋</text><text class="tg" x="622" y="302" font-size="8">LJ</text>
          <text class="tw" x="533" y="333" font-size="7">斜面筋</text><text class="tg" x="535" y="341" font-size="8">XMJ</text>
          <text class="tg" x="650" y="335" font-size="8">XMSJ</text><text class="tg" x="569" y="360" font-size="8">XWZ</text>
          <text class="tg" transform="rotate(-90 536 248)" x="522" y="248" font-size="8">XWXSJWZ</text>
          <text class="tg" transform="rotate(-90 531 330)" x="529" y="330" font-size="8">h</text>
          <text class="tw dim" transform="rotate(-55 656 222)" x="656" y="222" font-size="7">节点设置</text>
          <text class="tw dim" transform="rotate(-55 643 323)" x="643" y="323" font-size="7">节点设置</text>
          <text class="ser" x="578" y="296" font-size="18">1-1</text>
          <text class="ser" x="584" y="393" font-size="18">2-2</text>
          <text class="tw" x="613" y="384" font-size="13.500">梁式配筋承台</text>
        </svg>
      </div>
      <div class="cell h2">
        <svg class="cad" viewBox="142 406 302 178">
          <path class="ye t2" d="M200 462H276L246 522H170Z"/>
          <path class="m t2" d="M184 473H262V516H184Z"/>
          <path class="m" d="M256 478L261 474M258 480L262 476"/>
          <path class="cy t2" d="M235 452V513M235 452L206 508V568L235 515M206 507H216M206 511H216"/>
          <path class="ye" d="M270 470L276 462M266 468L276 462"/>
          <g class="w">
            <path d="M280 438V527M273 438H288M273 527H288M293 438H417V527H293ZM343 516V565M369 516V565M337 565H353L355 561L357 569L360 565H373"/>
            <path d="M319 445V421H333M350 443L357 430M359 443L366 430M368 443L375 430M377 443L384 430M386 443L393 430M357 430H396M306 467L298 470M306 479L298 482M306 490L298 493M306 467V501"/>
          </g>
          <path class="m t2" d="M298 442H412V512H298Z"/>
          <path class="cy dots" d="M300 443H410M300 511H410"/>
          <text class="tw" x="307" y="418" font-size="9.500">横向钢筋</text><text class="tg" x="346" y="418" font-size="10">XGJ</text>
          <text class="tw" x="356" y="428" font-size="9.500">纵向钢筋</text><text class="tg" x="395" y="428" font-size="10">YGJ</text>
          <text class="tg" transform="rotate(-90 284 482)" x="280" y="486" font-size="10">h</text>
          <text class="tw" transform="rotate(-90 318 495)" x="318" y="495" font-size="9.500">侧面钢筋</text>
          <text class="tg" transform="rotate(-90 332 493)" x="332" y="493" font-size="10">CGJ</text>
          <text class="tg" transform="rotate(-90 385 528)" x="375" y="528" font-size="9">ISC</text>
          <text class="tw" x="214" y="578" font-size="19.500">环式配筋承台</text>
        </svg>
      </div>
    </div>
    <div class="vscroll">
      <span class="arrow up"></span>
      <span class="vthumb"></span>
      <span class="arrow down"></span>
    </div>
  </div>
  <div class="win-foot front-foot">
    <button class="dlgbtn" type="button">确定</button>
    <button class="dlgbtn" type="button">取消</button>
  </div>
</section>

<svg class="ring" viewBox="0 0 410 410" aria-hidden="true"><ellipse cx="205" cy="204" rx="202" ry="201"/></svg>

<div class="ime">
  <svg class="ime-logo"><use href="#i-sg"/></svg>
  <div class="ime-bar">
    <b class="zh">中</b><span class="pun">°,</span>
    <svg class="imi" viewBox="0 0 16 16"><circle cx="8" cy="8" r="7" fill="none" stroke="#1f7ed8" stroke-width="1.500"/><path d="M6 5v3M10 5v3M5 10c2 3 4 3 6 0" fill="none" stroke="#1f7ed8" stroke-width="1.300"/></svg>
    <svg class="imi blue"><use href="#i-mic"/></svg>
    <svg class="imi"><use href="#i-kb"/></svg>
    <svg class="imi" viewBox="0 0 16 16"><circle cx="7" cy="5" r="3" fill="#a8b4c0"/><path d="M2 14c0-6 10-6 10 0z" fill="#a8b4c0"/><text x="9" y="15" font-size="7" font-family="Liberation Sans" fill="#8894a0">2D</text></svg>
    <svg class="imi"><use href="#i-shirt"/></svg>
    <svg class="imi"><use href="#i-wrench"/></svg>
  </div>
</div>

<div class="taskbar">
  <div class="start"><svg class="winlogo" viewBox="0 0 16 16"><path d="M0 2.500L7 1.500V7.500H0zM8 1.400L16 0V7.500H8zM0 8.500H7V14.500L0 13.500zM8 8.500H16V16L8 14.600z" fill="#fff"/></svg></div>
  <div class="searchbox"><span class="cortana"></span><span class="ph">在这里输入你要搜索的内容</span><svg class="smic"><use href="#i-mic"/></svg></div>
  <div class="apps">
    <span class="app-c"><span class="tv"></span></span>
    <span class="app-c"><svg class="ti"><use href="#s-pin"/></svg></span>
    <span class="app-c"><svg class="ti"><use href="#s-ie"/></svg></span>
    <span class="app-c"><svg class="ti"><use href="#s-swirl"/></svg></span>
    <span class="app-c"><svg class="ti"><use href="#s-edge"/></svg></span>
    <span class="app-c"><svg class="ti"><use href="#s-folder"/></svg></span>
    <span class="app-c"><svg class="ti"><use href="#s-ie2"/></svg></span>
    <span class="app-c run"><svg class="ti"><use href="#s-g"/></svg></span>
    <span class="app-c run"><svg class="ti"><use href="#s-green"/></svg></span>
    <span class="app-c run"><svg class="ti"><use href="#s-note"/></svg></span>
    <span class="app-c run act"><svg class="ti"><use href="#logo"/></svg></span>
  </div>
  <span class="link-lbl">链接</span>
  <div class="cpu"><span>9%</span><span>CPU使用</span></div>
  <div class="tray">
    <span class="caret"></span>
    <svg class="tr" viewBox="0 0 16 16"><rect x="4" y="6" width="11" height="8" fill="#ddd" stroke="#fff"/><path d="M3 1v5M7 1v5M1 4h8" stroke="#fff" stroke-width="1.200"/></svg>
    <svg class="tr" viewBox="0 0 16 16"><path d="M2 14a12 12 0 0 1 12-12M5 14a9 9 0 0 1 9-9M8 14a6 6 0 0 1 6-6" fill="none" stroke="#ccc"/><circle cx="12" cy="13" r="1.500" fill="#fff"/></svg>
    <svg class="tr" viewBox="0 0 16 16"><path d="M1 6h3l4-4v12l-4-4H1z" fill="none" stroke="#eee"/><path d="M10 5c2 2 2 4 0 6M12 3c3 3 3 7 0 10" fill="none" stroke="#eee"/></svg>
    <svg class="kb" viewBox="0 0 22 14"><rect x=".5" y=".5" width="21" height="13" fill="none" stroke="#eee"/><path d="M3 4h16M3 7h16M6 10h10" stroke="#eee" stroke-dasharray="1.500 1"/></svg>
    <span class="t-zh">中</span>
    <svg class="tr sg"><use href="#i-sg"/></svg>
  </div>
  <div class="clock"><span>21:11</span><span>2018/1/15</span></div>
  <div class="notify"><svg class="nt" viewBox="0 0 16 14"><path d="M0 0H16V10H4L2 14V10H0Z" fill="#fff"/><path d="M3 3H13M3 6H13" stroke="#222"/></svg><b class="badge">21</b></div>
</div>
</body>
</html>
```
FILE: styles.css
```css
* { box-sizing: border-box; }
html, body { margin: 0; padding: 0; }
body { width: 1366px; height: 768px; overflow: hidden; position: relative; background: #f0f0f0; font: 12px/1.2 "Noto Sans CJK SC", "Liberation Sans", sans-serif; color: #111; }
.defs { position: absolute; width: 0; height: 0; }
.ic { width: 16px; height: 16px; flex: none; display: block; }
.ic.sm { width: 12px; height: 14px; }
i { font-style: normal; }
.dd { display: inline-block; width: 0; height: 0; border-left: 3px solid transparent; border-right: 3px solid transparent; border-top: 3px solid #222; flex: none; }
.dd.g { border-top-color: #888; }

.app { width: 1366px; height: 728px; display: flex; flex-direction: column; }
.titlebar { height: 23px; background: #fff; display: flex; align-items: center; padding-left: 3px; flex: none; }
.app-ic { width: 15px; height: 15px; flex: none; }
.title-text { margin-left: 5px; color: #808080; font-size: 12.600px; white-space: nowrap; }
.win-ctl { margin-left: auto; width: 122px; height: 23px; flex: none; display: flex; align-items: center; gap: 35px; }
.wc-min { display: block; width: 10px; height: 1px; background: #999; }
.wc-restore { display: block; width: 9px; height: 10px; border: 1px solid #999; position: relative; }
.wc-restore::before { content: ""; position: absolute; left: 1px; top: -3px; width: 8px; height: 9px; border-top: 1px solid #999; border-right: 1px solid #999; }
.wc-close { color: #999; font-size: 13px; line-height: 1; }

.menubar { height: 27px; background: #f0f0f0; display: flex; align-items: center; padding-left: 1px; flex: none; white-space: nowrap; }
.menubar > span { padding: 0 5.300px; }
.menubar > .hat { margin: 0 9px 0 -4px; }
.menubar .mi { display: flex; align-items: center; gap: 4px; }
.menubar .mi .dd { margin-left: 3px; }
.menubar .mi.first { padding-right: 1px; }
.account { margin-left: auto; display: flex; height: 27px; }
.blank { width: 26px; height: 26px; background: #f8f8f8; margin-right: 1px; }
.acc-row { width: 221px; height: 26px; background: #f8f8f8; display: flex; align-items: center; padding-left: 5px; gap: 4px; }
.acc-row .dd { margin-left: 4px; }
.bean { margin-left: 2px; }
.bell { margin-left: 5px; margin-right: 3px; }

.tb1 { height: 32px; display: flex; flex: none; background: #f0f0f0; }
.tb1-left { width: 152px; height: 30px; margin-top: 1px; background: #f6f6f6; display: flex; align-items: center; padding-left: 4px; }
.gapm { margin-left: 8px; }
.tb1-left .dd { margin-left: 4px; }
.tb1-left .vsep { margin: 0 5px 0 7px; }
.more { font: 700 12px/1 "Liberation Sans", sans-serif; color: #222; align-self: flex-start; margin-top: 4px; }
.tb1-left .more { margin-left: 24px; }
.tb1-right { width: 1213px; margin-left: 1px; height: 30px; margin-top: 1px; background: #f6f6f6; display: flex; align-items: center; padding-left: 2px; gap: 7px; white-space: nowrap; }
.tool { display: flex; align-items: center; gap: 4px; flex: none; }
.tool .dd { margin-left: 3px; }
.tool.w { margin-left: 3px; }
.tool.off { color: #8c8c8c; }
.sigma { width: 16px; text-align: center; font: 700 14px/1 "Liberation Serif", serif; color: #111; }
.vsep { width: 1px; height: 20px; background: #888; flex: none; }
.vsep.lt { background: #c4c4c4; }
.vsep.tight { margin-right: -2px; }
.m2 { margin-left: 18px; margin-right: -8px; }
.combo2 { width: 63px; height: 25px; border: 1px solid #555; display: flex; align-items: center; gap: 3px; padding-left: 2px; color: #8c8c8c; flex: none; }
.combo2 .dd { margin-left: 5px; border-top-color: #444; }
.tool.n { margin-left: -6px; }
.end { margin-left: auto; margin-right: 2px; }

.workspace { flex: 1; display: flex; min-height: 0; }
.sidebar { width: 165px; flex: none; display: flex; flex-direction: column; padding-bottom: 2px; }
.nav-head { height: 15px; border: 1px solid #9a9a9a; font-size: 12.500px; line-height: 13px; display: flex; align-items: center; overflow: hidden; background: #f2f2f2; }
.nav-head .pin { margin-left: auto; width: 10px; height: 12px; flex: none; }
.nav-head .x { width: 15px; margin-left: 4px; text-align: center; font-size: 14px; }
.navbtn { height: 22px; flex: none; margin: 0 0 0 1px; width: 164px; font: 13px/18px "Noto Sans CJK SC", sans-serif; background: #f0f0f0; border: 1px solid #adadad; border-left-color: #e8e8e8; padding: 0; color: #111; }
.treepane { flex: 1; min-height: 0; margin: 1px 0 0 2px; width: 162px; background: #fff; border: 1px solid #8e8e8e; border-top: 0; display: flex; flex-direction: column; }
.tree-tools { height: 26px; flex: none; background: linear-gradient(#ffffff, #dedede); display: flex; align-items: center; gap: 8px; padding-left: 5px; border-bottom: 1px solid #ddd; }
.tree { flex: 1; min-height: 0; overflow: hidden; padding-top: 2px; background: #fff; font-size: 13px; position: relative; }
.row { height: 16px; display: flex; align-items: center; white-space: nowrap; line-height: 16px; }
.row em, .status em { font: 11px/16px "Liberation Mono", monospace; font-style: normal; }
.row .ic { margin-right: 4px; }
.l1 { padding-left: 8px; }
.l1 .ic { margin-right: 5px; }
.lev2 { margin-left: 31px; border-left: 1px dotted #555; }
.dash { display: block; width: 10px; border-bottom: 1px dotted #555; flex: none; }
.dash.s { width: 6px; margin-right: 1px; }
.chev { display: block; width: 7px; height: 7px; border-right: 2px solid #777; border-bottom: 2px solid #777; transform: rotate(-45deg); flex: none; margin-right: 2px; }
.chev.open { transform: rotate(45deg) translate(-1px, -1px); border-color: #555; }
.row.sel { background: #d9d9d9; width: 92px; margin-left: 11px; }
.row.sel .dash { display: none; }
.hscroll { height: 15px; flex: none; margin-bottom: 3px; background: #f0f0f0; display: flex; align-items: center; font: 700 15px/1 "Liberation Sans", sans-serif; color: #444; }
.ha { width: 18px; text-align: center; flex: none; }
.hthumb { width: 102px; height: 15px; background: #cdcdcd; margin: 0 2px; }

.mainarea { flex: 1; min-width: 0; margin-left: 7px; display: flex; flex-direction: column; }
.tb2 { height: 29px; flex: none; margin-top: 1px; background: #f6f6f6; display: flex; align-items: center; gap: 7px; padding-left: 3px; white-space: nowrap; }
.tb2 .tool .dd { margin-left: -2px; }
.tool.mv { gap: 7px; }
.tool.dn { margin-left: 3px; gap: 5px; }
.xmark { width: 16px; font: 700 14px/1 "Liberation Sans", sans-serif; text-align: center; color: #333; }
.floor-lbl { margin-left: -4px; flex: none; }
.floor-box { width: 63px; height: 25px; background: #fff; display: flex; align-items: center; justify-content: space-between; padding: 0 6px 0 0; flex: none; }
.after-box { margin-left: -5px; margin-right: -3px; }
.panes { flex: 1; min-height: 0; display: flex; gap: 5px; margin-top: 2px; }
.comp-tree { width: 183px; flex: none; background: #fff; border: 1px solid #9a9a9a; display: flex; flex-direction: column; position: relative; margin-bottom: 1px; }
.search-row { height: 22px; }
.search { display: block; width: 40px; height: 17px; border: 1px solid #999; margin: 2px 0 0 -1px; font-size: 13px; line-height: 15px; }
.ct-rows { margin-top: auto; padding-bottom: 3px; }
.ct { height: 16px; display: flex; align-items: center; padding-left: 26px; gap: 9px; }
.ct > .g14 { margin-right: -1px; }
.ct.sub { padding-left: 50px; gap: 2px; }
.ct .chev { margin-right: 0; margin-left: -1px; }
.g14 { width: 14px; height: 14px; }
.mono { font: 11px/16px "Liberation Mono", "Noto Sans CJK SC", monospace; }
.wide { margin-left: 4px; letter-spacing: -.4px; }
.tail { position: absolute; right: 5px; bottom: 7px; }
.canvas { flex: 1; background: #fff; border: 1px solid #9a9a9a; box-shadow: 0 0 0 1px #f0f0f0, 0 0 0 2px #b0b0b0; margin: 18px 2px 2px 2px; }

.status { height: 21px; flex: none; display: flex; gap: 2px; padding-top: 1px; font-size: 13px; }
.st { height: 20px; border: 1px solid #dcdcdc; background: #f5f5f5; line-height: 18px; padding-left: 1px; display: block; white-space: nowrap; }
.s0 { width: 148px; }
.s1 { width: 78px; }
.s2 { width: 98px; margin-left: 1px; }
.s3 { width: 48px; margin-left: 1px; }
.s4 { width: 910px; }
.s5 { flex: 1; padding-left: 1px; }

.win { position: absolute; display: flex; flex-direction: column; background: #f0f0f0; }
.back-win { left: 192px; top: 113px; width: 981px; height: 533px; border: 1px solid #a8a8a8; border-left-color: #ccc; box-shadow: 0 4px 12px rgba(0, 0, 0, .25); }
.front-win { left: 138px; top: 129px; width: 636px; height: 503px; border: 1px solid #3f98e8; box-shadow: 0 5px 16px rgba(0, 0, 0, .35); }
.win-title { height: 33px; background: #fff; display: flex; align-items: center; padding-left: 8px; gap: 5px; flex: none; }
.front-win .win-title { height: 32px; }
.win-title .app-ic { width: 16px; height: 16px; }
.grey { color: #888; margin-left: 1px; }
.dlg-ctl { margin-left: auto; display: flex; align-items: center; gap: 35px; padding-right: 18px; }
.wc-max { display: block; width: 10px; height: 10px; border: 1px solid #888; }
.wc-min.faint { background: #ccc; }
.wc-max.dark { border-color: #111; }
.wc-close.dark { color: #222; }
.back-win .wc-min { background: #888; }
.radio-row { height: 29px; flex: none; background: #eee; padding-left: 683px; display: flex; align-items: center; gap: 3px; font-size: 12px; border-bottom: 2px solid #f4f4f4; }
.radio { width: 13px; height: 13px; border: 1px solid #444; border-radius: 50%; background: #fff; }
.cad { display: block; width: 100%; height: 100%; background: #000; shape-rendering: crispEdges; }
.big { flex: none; width: 978px; height: 433px; }
.w path, .w, .wline { fill: none; stroke: #fff; stroke-width: 1; }
.m { fill: none; stroke: #f0f; stroke-width: 1; }
.re { fill: none; stroke: #f00; stroke-width: 1; }
.gr { fill: none; stroke: #0f0; stroke-width: 1; }
.cy { fill: none; stroke: #0ff; stroke-width: 1; }
.ye { fill: none; stroke: #ff0; stroke-width: 1; }
.t2 { stroke-width: 2; }
.dots { stroke-dasharray: 1 9; }
.tw { fill: #fff; font-family: "Noto Sans CJK SC", sans-serif; }
.tw.dim { fill: #bbb; }
.tg { fill: #0f0; font-family: "Liberation Mono", monospace; }
.ser { fill: #fff; font-family: "Liberation Serif", serif; }
.win-foot { flex: none; display: flex; align-items: flex-start; }
.back-foot { height: 37px; padding: 8px 0 0 761px; gap: 15px; position: relative; }
.front-foot { height: 47px; padding: 12px 0 0 408px; gap: 14px; }
.dlgbtn { width: 89px; height: 25px; background: #e1e1e1; border: 1px solid #adadad; outline: 1px solid #c8c8c8; outline-offset: -2px; font: 12px/1 "Noto Sans CJK SC", sans-serif; color: #111; padding: 0; }
.under { position: absolute; left: 337px; top: 7px; border: 2px solid #0078d7; outline: 0; }
.picklist { height: 422px; flex: none; display: flex; position: relative; }
.gallery { width: 616px; height: 422px; overflow: hidden; display: grid; grid-template-columns: 302px 302px; grid-template-rows: 29px 205px 178px; column-gap: 5px; row-gap: 5px; padding-left: 3px; align-content: start; }
.cell { overflow: hidden; background: #000; position: relative; }
.picked { outline: 3px solid #f00; outline-offset: -3px; }
.vscroll { width: 16px; position: relative; background: #f0f0f0; }
.vthumb { position: absolute; left: 1px; top: 196px; width: 15px; height: 197px; background: #cdcdcd; }
.arrow { position: absolute; left: 5px; width: 7px; height: 7px; border-left: 2px solid #555; border-top: 2px solid #555; transform: rotate(45deg); }
.arrow.up { top: 7px; }
.arrow.down { top: 409px; transform: rotate(225deg); }

.ring { position: absolute; left: 417px; top: 86px; width: 410px; height: 410px; pointer-events: none; shape-rendering: crispEdges; }
.ring ellipse { fill: none; stroke: #f00; stroke-width: 3.500; }

.ime { position: absolute; left: 840px; top: 7px; display: flex; align-items: flex-start; }
.ime-logo { width: 24px; height: 28px; flex: none; position: relative; z-index: 1; }
.ime-bar { width: 186px; height: 23px; margin-top: 2px; margin-left: -2px; background: rgba(250, 250, 252, .92); border: 1px solid #b8c8d8; display: flex; align-items: center; padding-left: 11px; gap: 4px; }
.zh { color: #1f7ed8; font-size: 15px; line-height: 1; }
.pun { color: #1f7ed8; font: 700 14px/1 "Liberation Sans", sans-serif; width: 21px; margin-left: 2px; }
.imi { width: 17px; height: 16px; flex: none; margin-right: 1px; }
.imi.blue { color: #1f7ed8; }

.taskbar { position: absolute; left: 0; top: 728px; width: 1366px; height: 40px; background: #04131a; display: flex; align-items: center; color: #ddd; }
.start { width: 48px; height: 40px; background: #000; display: flex; align-items: center; justify-content: center; flex: none; }
.winlogo { width: 16px; height: 16px; }
.searchbox { width: 344px; height: 40px; background: #333; display: flex; align-items: center; padding-left: 9px; flex: none; }
.cortana { width: 21px; height: 21px; border: 3px solid #d8d8d8; border-radius: 50%; flex: none; }
.ph { margin-left: 6px; color: #8a8a8a; font-size: 14px; white-space: nowrap; }
.smic { width: 14px; height: 19px; margin-left: 112px; color: #888; }
.apps { display: grid; grid-template-columns: 49px 51px 52px 52px 50px 48px 49px 50px 48px 48px 47px; height: 40px; flex: none; }
.app-c { display: flex; align-items: center; justify-content: center; height: 40px; position: relative; }
.ti { width: 24px; height: 24px; }
.run::after { content: ""; position: absolute; left: 3px; right: 3px; bottom: 0; height: 2px; background: #76b9ed; }
.act { background: #3a4449; }
.act::after { left: 0; right: 0; }
.tv { width: 14px; height: 17px; border: 1.500px solid #f2f2f2; box-shadow: -3px 0 0 -1px #04131a, -4px 0 0 -1px #eee, 3px 0 0 -1px #04131a, 4px 0 0 -1px #eee; }
.link-lbl { margin-left: 13px; color: #c8c8c8; flex: none; }
.cpu { width: 68px; margin-left: 9px; display: flex; flex-direction: column; align-items: center; gap: 2px; color: #ccc; flex: none; line-height: 18px; }
.tray { display: flex; align-items: center; margin-left: 9px; gap: 9px; flex: none; }
.caret { width: 9px; height: 9px; border-left: 1.500px solid #eee; border-top: 1.500px solid #eee; transform: rotate(45deg); margin: 5px 3px 0 2px; }
.tr { width: 16px; height: 16px; flex: none; }
.kb { width: 23px; height: 15px; margin-left: -3px; }
.t-zh { color: #fff; font-size: 14px; font-weight: 700; }
.sg { width: 17px; height: 20px; margin-left: 3px; }
.clock { position: relative; z-index: 1; width: 72px; margin-left: 11px; display: flex; flex-direction: column; align-items: center; gap: 3px; color: #e0e0e0; flex: none; line-height: 17px; font-size: 12.500px; }
.notify { flex: 1; height: 40px; position: relative; background: #0a0d0e; margin-left: -15px; }
.nt { position: absolute; left: 28px; top: 9px; width: 16px; height: 16px; }
.badge { position: absolute; left: 33px; top: 17px; width: 19px; height: 19px; border-radius: 50%; background: #333; border: 1px solid #999; color: #fff; font: 700 12px/17px "Liberation Sans", sans-serif; text-align: center; }
```
